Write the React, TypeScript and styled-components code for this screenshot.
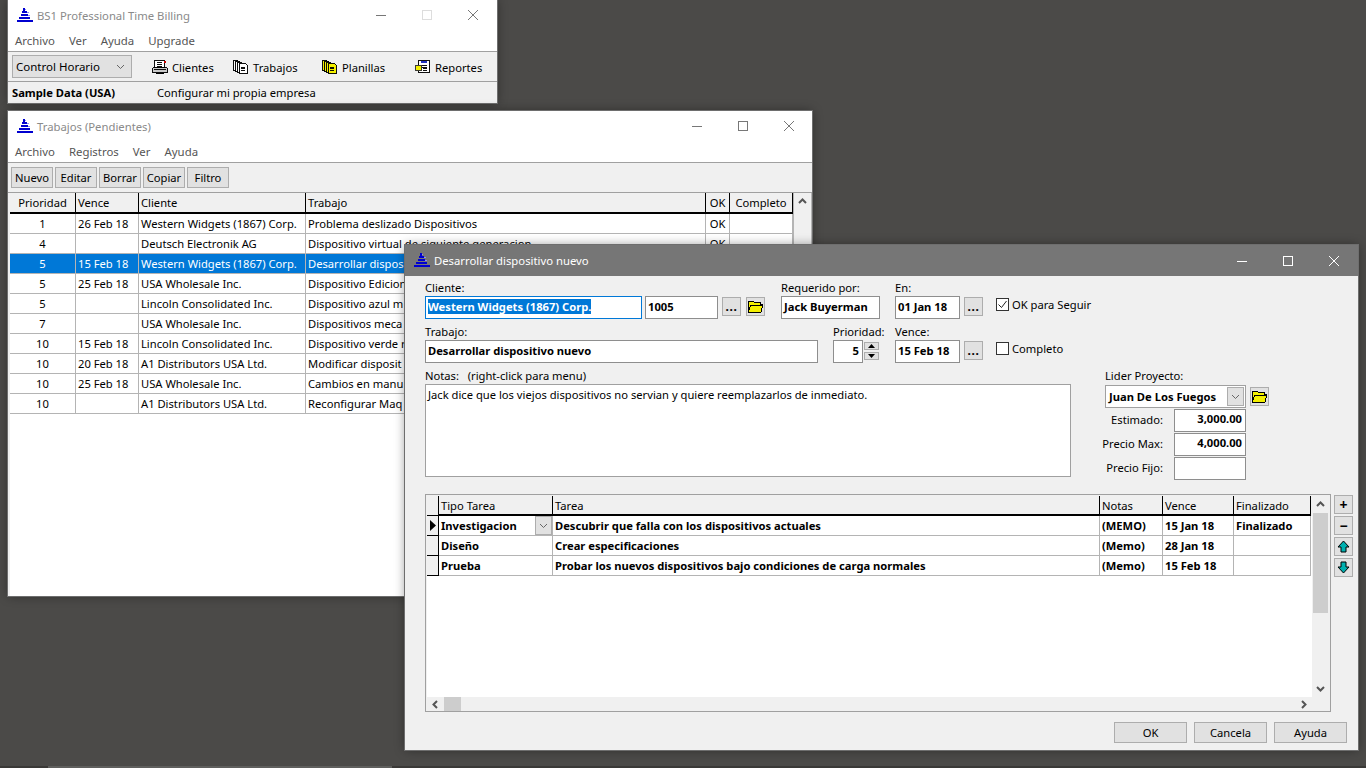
import React from "react";
import styled, { createGlobalStyle } from "styled-components";

const Global = createGlobalStyle`
  html, body { margin: 0; padding: 0; height: 100%; overflow: hidden; background: #4b4a48; }
  #root { height: 768px; }
  * { box-sizing: border-box; }
`;

const FONT = `"Noto Sans", "Liberation Sans", sans-serif`;

const Desktop = styled.div`
  position: relative;
  width: 1366px;
  height: 768px;
  background: #4b4a48;
  font-family: ${FONT};
  font-size: 11.2px;
  color: #000;
  overflow: hidden;
`;
const BottomEdge = styled.div`
  position: absolute;
  left: 0;
  right: 0;
  bottom: 0;
  height: 2px;
  display: flex;
  background: #3a3937;
`;
const BottomEdgeLight = styled.div`
  width: 344px;
  margin-left: 48px;
  background: #5f5f5d;
`;

const Win = styled.div`
  position: absolute;
  display: flex;
  flex-direction: column;
  background: #f0f0f0;
  box-shadow: 0 0 0 1px #6e6e6e, 0 0 10px rgba(0, 0, 0, 0.4);
`;
const MainWin = styled(Win)`
  left: 8px; top: 0; width: 489px; height: 103px;
`;
const JobsWin = styled(Win)`
  left: 8px; top: 111px; width: 804px; height: 485px;
`;
const DialogWin = styled(Win)`
  left: 405px; top: 245px; width: 953px; height: 505px;
`;

const TitleBar = styled.div<{ $active?: boolean }>`
  flex: 0 0 ${(p) => (p.$active ? 31 : 30)}px;
  display: flex;
  align-items: center;
  padding-left: 9px;
  background: ${(p) => (p.$active ? "#767676" : "#fff")};
  color: ${(p) => (p.$active ? "#fff" : "#8a8a8a")};
  font-size: 11.3px;
`;
const TitleText = styled.span`
  margin-left: 4px;
  flex: 1;
  white-space: nowrap;
`;
const Caption = styled.div<{ $active?: boolean }>`
  width: 46px;
  height: 30px;
  display: flex;
  align-items: center;
  justify-content: center;
  color: ${(p) => (p.$active ? "#fff" : "#777")};
`;
const CaptionRow = styled.div<{ $mr?: number }>`
  display: flex;
  margin-right: ${(p) => p.$mr ?? 1}px;
`;

const MenuBar = styled.div`
  flex: 0 0 22px;
  display: flex;
  align-items: center;
  gap: 14px;
  padding: 0 7px;
  background: #fff;
  color: #555;
  font-size: 11.4px;
  border-bottom: 1px solid #a0a0a0;
`;

const MainToolbar = styled.div`
  flex: 0 0 30px;
  display: flex;
  align-items: center;
  padding-left: 4px;
  border-bottom: 1px solid #a0a0a0;
`;
const Combo = styled.div`
  width: 120px;
  height: 23px;
  margin-right: 20px;
  display: flex;
  align-items: center;
  justify-content: space-between;
  padding: 0 6px 0 3px;
  background: #e1e1e1;
  border: 1px solid #adadad;
  font-size: 11.5px;
`;
const ToolItem = styled.div<{ $w: number }>`
  width: ${(p) => p.$w}px;
  display: flex;
  align-items: center;
  gap: 4px;
  white-space: nowrap;
  padding-top: 1px;
`;
const StatusBar = styled.div`
  flex: 1;
  display: flex;
  align-items: center;
  padding-left: 4px;
`;
const StatusName = styled.span`
  font-weight: 700;
  width: 145px;
`;

const JobsToolbar = styled.div`
  flex: 0 0 30px;
  display: flex;
  align-items: center;
  gap: 2px;
  padding-left: 3px;
  border-bottom: 1px solid #a0a0a0;
`;
const SmallBtn = styled.div`
  width: 42px;
  height: 21px;
  display: flex;
  align-items: center;
  justify-content: center;
  background: #e1e1e1;
  border: 1px solid #adadad;
`;

const JobsTable = styled.div`
  flex: 1;
  display: flex;
  margin: 0 0 0 2px;
  background: #fff;
`;
const JobsList = styled.div`
  flex: 0 0 783px;
`;
const JobsRow = styled.div<{ $sel?: boolean }>`
  display: grid;
  grid-template-columns: 66px 63px 167px 400px 24px 63px;
  height: 20px;
  background: ${(p) => (p.$sel ? "#0078d7" : "#fff")};
  color: ${(p) => (p.$sel ? "#fff" : "#000")};
`;
const Cell = styled.div<{ $center?: boolean }>`
  display: flex;
  align-items: center;
  justify-content: ${(p) => (p.$center ? "center" : "flex-start")};
  padding: 0 2px;
  border-right: 1px solid #b4b4b4;
  border-bottom: 1px solid #b4b4b4;
  white-space: nowrap;
  overflow: hidden;
`;
const HeadCell = styled(Cell)`
  background: #f0f0f0;
  border-right: 1px solid #000;
  border-bottom: 2px solid #000;
`;
const JobsHead = styled(JobsRow)`
  height: 21px;
  background: #f0f0f0;
`;

const VScroll = styled.div`
  flex: 1;
  display: flex;
  flex-direction: column;
  background: #f0f0f0;
  border-left: 1px solid #b4b4b4;
  border-right: 1px solid #b4b4b4;
`;
const ScrollArrow = styled.div`
  height: 17px;
  flex: none;
  display: flex;
  align-items: center;
  justify-content: center;
  color: #555;
`;
const ScrollThumb = styled.div`
  height: 100px;
  flex: none;
  background: #cdcdcd;
  margin: 0 1px;
`;
const ScrollFill = styled.div`
  flex: 1;
`;

/* dialog */
const DialogBody = styled.div`
  flex: 1;
  display: flex;
  flex-direction: column;
  padding: 5px 0 0 20px;
`;
const FormRow = styled.div`
  display: flex;
  height: 44px;
  align-items: flex-start;
`;
const Field = styled.div<{ $w: number; $ml?: number }>`
  width: ${(p) => p.$w}px;
  margin-left: ${(p) => p.$ml ?? 0}px;
  display: flex;
  flex-direction: column;
  white-space: nowrap;
`;
const Label = styled.label`
  height: 15px;
  line-height: 13px;
  display: block;
`;
const Input = styled.div<{ $right?: boolean; $focus?: boolean }>`
  height: 23px;
  display: flex;
  align-items: center;
  justify-content: ${(p) => (p.$right ? "flex-end" : "flex-start")};
  padding: 0 3px 2px 2px;
  background: #fff;
  border: 1px solid ${(p) => (p.$focus ? "#0078d7" : "#8e8e8e")};
  font-weight: 700;
  white-space: nowrap;
  overflow: hidden;
`;
const Selected = styled.span`
  background: #0078d7;
  color: #fff;
`;
const DotsBtn = styled.div<{ $ml: number }>`
  width: 19px;
  height: 19px;
  margin-left: ${(p) => p.$ml}px;
  margin-top: 16px;
  display: flex;
  align-items: center;
  justify-content: center;
  background: #e1e1e1;
  border: 1px solid #adadad;
  font-weight: 700;
  font-size: 12px;
  letter-spacing: 0.6px;
  line-height: 1;
`;
const CheckWrap = styled.div<{ $ml: number }>`
  margin-left: ${(p) => p.$ml}px;
  margin-top: 13px;
  display: flex;
  align-items: center;
  gap: 3px;
  height: 20px;
  white-space: nowrap;
`;
const CheckBox = styled.div`
  width: 13px;
  height: 13px;
  background: #fff;
  border: 1px solid #333;
  display: flex;
  align-items: center;
  justify-content: center;
`;
const Spinner = styled.div`
  width: 15px;
  margin-left: 1px;
  margin-top: 17px;
  display: flex;
  flex-direction: column;
  gap: 2px;
`;
const SpinBtn = styled.div`
  height: 8px;
  background: #e1e1e1;
  border: 1px solid #adadad;
  display: flex;
  align-items: center;
  justify-content: center;
`;
const NotesRow = styled.div`
  display: flex;
  height: 125px;
`;
const NotesCol = styled.div`
  width: 646px;
  display: flex;
  flex-direction: column;
`;
const NotesLabel = styled(Label)`
  white-space: pre;
`;
const NotesArea = styled.div`
  height: 93px;
  background: #fff;
  border: 1px solid #a0a0a0;
  padding: 2px 2px;
`;
const SideCol = styled.div`
  width: 164px;
  margin-left: 34px;
  display: flex;
  flex-direction: column;
`;
const LeaderRow = styled.div`
  display: flex;
  align-items: center;
  height: 24px;
`;
const LeaderCombo = styled.div`
  width: 141px;
  height: 23px;
  display: flex;
  align-items: center;
  justify-content: space-between;
  padding: 0 1px 0 3px;
  background: #fff;
  border: 1px solid #a0a0a0;
  font-weight: 700;
`;
const ComboBtn = styled.div`
  width: 17px;
  height: 19px;
  flex: none;
  background: #e1e1e1;
  border: 1px solid #adadad;
  display: flex;
  align-items: center;
  justify-content: center;
`;
const PriceRow = styled.div`
  display: flex;
  align-items: center;
  height: 24px;
  width: 141px;
`;
const PriceLabel = styled.span`
  width: 58px;
  display: flex;
  justify-content: flex-end;
  white-space: nowrap;
  flex: none;
  margin-right: 11px;
  padding-bottom: 2px;
`;
const PriceInput = styled(Input)`
  width: 72px;
  flex: none;
  padding-bottom: 4px;
`;
const IconBtn = styled.div<{ $ml?: number }>`
  width: 19px;
  height: 19px;
  margin-left: ${(p) => p.$ml ?? 0}px;
  background: #e1e1e1;
  border: 1px solid #adadad;
  display: flex;
  align-items: center;
  justify-content: center;
  flex: none;
  font-weight: 700;
  font-size: 14px;
  line-height: 1;
`;
const FolderBtn = styled(IconBtn)`
  margin-top: 16px;
`;

const GridArea = styled.div`
  display: flex;
  height: 218px;
`;
const TaskGrid = styled.div`
  width: 906px;
  display: flex;
  border: 1px solid #a0a0a0;
  padding: 1px 0 0 1px;
`;
const TaskMain = styled.div`
  flex: 1;
  display: flex;
  flex-direction: column;
`;
const TaskBody = styled.div`
  flex: 1;
  background: #fff;
  min-height: 0;
`;
const TaskRow = styled.div`
  display: grid;
  grid-template-columns: 12px 114px 547px 63px 71px 77px;
  height: 20px;
  font-weight: 700;
`;
const TaskHead = styled(TaskRow)`
  font-weight: 400;
`;
const TaskCell = styled(Cell)`
  justify-content: space-between;
  padding-right: 0;
`;
const Indicator = styled.div`
  background: #f0f0f0;
  border-right: 1px solid #000;
  border-bottom: 1px solid #000;
  display: flex;
  align-items: center;
  justify-content: flex-end;
  padding-right: 2px;
`;
const HScroll = styled.div`
  flex: 0 0 14px;
  display: flex;
  align-items: center;
  background: #f0f0f0;
  color: #555;
`;
const HArrow = styled.div`
  width: 17px;
  display: flex;
  align-items: center;
  justify-content: center;
`;
const HThumb = styled.div`
  width: 17px;
  height: 14px;
  background: #cdcdcd;
`;
const TaskScroll = styled.div`
  flex: 0 0 17px;
  display: flex;
  flex-direction: column;
  background: #f0f0f0;
  margin-right: 1px;
`;
const SideButtons = styled.div`
  display: flex;
  flex-direction: column;
  gap: 2px;
  margin-left: 3px;
  margin-top: 1px;
`;
const DialogFooter = styled.div`
  display: flex;
  justify-content: flex-end;
  gap: 7px;
  margin-top: 10px;
  padding-right: 11px;
`;
const FooterBtn = styled.div`
  width: 73px;
  height: 21px;
  display: flex;
  align-items: center;
  justify-content: center;
  background: #e1e1e1;
  border: 1px solid #adadad;
`;

const Logo = () => (
  <svg width="16" height="15" viewBox="0 0 16 15" shapeRendering="crispEdges">
    <g fill="#0000d0">
      <rect x="6" y="0" width="2" height="3" />
      <rect x="5" y="3" width="5" height="2" />
      <rect x="4" y="6" width="7" height="2" />
      <rect x="2" y="9" width="11" height="2" />
      <rect x="0" y="12" width="16" height="2" />
    </g>
    <g fill="#8c8cff">
      <rect x="8" y="1" width="1" height="1" />
      <rect x="10" y="4" width="2" height="1" />
      <rect x="11" y="7" width="2" height="1" />
    </g>
  </svg>
);

const MinIcon = () => (
  <svg width="10" height="10" viewBox="0 0 10 10"><path d="M0 5.5H10" stroke="currentColor" /></svg>
);
const MaxIcon = ({ faded }: { faded?: boolean }) => (
  <svg width="10" height="10" viewBox="0 0 10 10">
    <rect x="0.5" y="0.5" width="9" height="9" fill="none" stroke={faded ? "#ddd" : "currentColor"} />
  </svg>
);
const CloseIcon = () => (
  <svg width="10" height="10" viewBox="0 0 10 10"><path d="M0 0L10 10M10 0L0 10" stroke="currentColor" /></svg>
);
const Chevron = ({ dir = "down", thin }: { dir?: string; thin?: boolean }) => {
  const d: Record<string, string> = {
    down: "M1 3L4.5 6.5L8 3",
    up: "M1 6L4.5 2.5L8 6",
    left: "M6 1L2.5 4.5L6 8",
    right: "M3 1L6.5 4.5L3 8",
  };
  return (
    <svg width="9" height="9" viewBox="0 0 9 9">
      <path d={d[dir]} fill="none" stroke={thin ? "#666" : "#555"} strokeWidth={thin ? 1 : 2} />
    </svg>
  );
};
const Folder = () => (
  <svg width="17" height="13" viewBox="0 0 17 13" shapeRendering="crispEdges">
    <path d="M1 1H6L7 2H13V4H16L14 12H1Z" fill="#f4f000" stroke="#000" />
    <path d="M1 12L4 5H16" fill="none" stroke="#000" />
  </svg>
);
const Clientes = () => (
  <svg width="16" height="16" viewBox="0 0 17 16" shapeRendering="crispEdges">
    <path d="M3 1H13V9H3Z" fill="#fff" stroke="#000" />
    <path d="M5 3H11M5 5H11M5 7H11" stroke="#000" />
    <path d="M1 9H16V14H1Z" fill="#c8c8c8" stroke="#000" />
    <path d="M2 11H15" stroke="#000" />
    <path d="M13 2H15V4H13Z" fill="#d00000" />
    <path d="M4 14H13V15H4Z" fill="#000" />
  </svg>
);
const Docs = ({ fill }: { fill: string }) => (
  <svg width="16" height="16" viewBox="0 0 17 16" shapeRendering="crispEdges">
    <path d="M1 1H5V12H1Z" fill={fill} stroke="#000" />
    <path d="M3 2H7V13H3Z" fill={fill} stroke="#000" />
    <path d="M5 3H9V14H5Z" fill={fill} stroke="#000" />
    <path d="M7 4H13L15 6V15H7Z" fill={fill} stroke="#000" />
    <path d="M9 8H13M9 10H13M9 12H13" stroke="#000" />
  </svg>
);
const Report = () => (
  <svg width="16" height="16" viewBox="0 0 17 16" shapeRendering="crispEdges">
    <path d="M4 1H15V14H4Z" fill="#fff" stroke="#000" />
    <path d="M6 2H13V4H6Z" fill="#2030c0" />
    <path d="M6 6H13M6 8H13M8 10H13M8 12H13" stroke="#000" />
    <path d="M1 6H7V12H1Z" fill="#f4f000" stroke="#303030" />
  </svg>
);
const Arrow = ({ up }: { up?: boolean }) => (
  <svg width="13" height="13" viewBox="0 0 13 13">
    <path
      d={up ? "M6.5 1L12 7H9V12H4V7H1Z" : "M6.5 12L12 6H9V1H4V6H1Z"}
      fill="#00b0b0"
      stroke="#000"
    />
  </svg>
);

const jobs: [string, string, string, string, string][] = [
  ["1", "26 Feb 18", "Western Widgets (1867) Corp.", "Problema deslizado Dispositivos", "OK"],
  ["4", "", "Deutsch Electronik AG", "Dispositivo virtual de siguiente generacion", "OK"],
  ["5", "15 Feb 18", "Western Widgets (1867) Corp.", "Desarrollar disposi", ""],
  ["5", "25 Feb 18", "USA Wholesale Inc.", "Dispositivo Edicion", ""],
  ["5", "", "Lincoln Consolidated Inc.", "Dispositivo azul m", ""],
  ["7", "", "USA Wholesale Inc.", "Dispositivos meca", ""],
  ["10", "15 Feb 18", "Lincoln Consolidated Inc.", "Dispositivo verde r", ""],
  ["10", "20 Feb 18", "A1 Distributors USA Ltd.", "Modificar disposit", ""],
  ["10", "25 Feb 18", "USA Wholesale Inc.", "Cambios en manu", ""],
  ["10", "", "A1 Distributors USA Ltd.", "Reconfigurar Maq", ""],
];

const tasks: [string, string, string, string, string][] = [
  ["Investigacion", "Descubrir que falla con los dispositivos actuales", "(MEMO)", "15 Jan 18", "Finalizado"],
  ["Diseño", "Crear especificaciones", "(Memo)", "28 Jan 18", ""],
  ["Prueba", "Probar los nuevos dispositivos bajo condiciones de carga normales", "(Memo)", "15 Feb 18", ""],
];

export default function App() {
  return (
    <Desktop>
      <Global />
      <BottomEdge><BottomEdgeLight /></BottomEdge>
      <MainWin>
        <TitleBar>
          <Logo />
          <TitleText>BS1 Professional Time Billing</TitleText>
          <CaptionRow>
            <Caption><MinIcon /></Caption>
            <Caption><MaxIcon faded /></Caption>
            <Caption><CloseIcon /></Caption>
          </CaptionRow>
        </TitleBar>
        <MenuBar>
          <span>Archivo</span><span>Ver</span><span>Ayuda</span><span>Upgrade</span>
        </MenuBar>
        <MainToolbar>
          <Combo>Control Horario <Chevron thin /></Combo>
          <ToolItem $w={81}><Clientes />Clientes</ToolItem>
          <ToolItem $w={89}><Docs fill="#fff" />Trabajos</ToolItem>
          <ToolItem $w={93}><Docs fill="#f4f000" />Planillas</ToolItem>
          <ToolItem $w={70}><Report />Reportes</ToolItem>
        </MainToolbar>
        <StatusBar>
          <StatusName>Sample Data (USA)</StatusName>
          <span>Configurar mi propia empresa</span>
        </StatusBar>
      </MainWin>

      <JobsWin>
        <TitleBar>
          <Logo />
          <TitleText>Trabajos (Pendientes)</TitleText>
          <CaptionRow $mr={0}>
            <Caption><MinIcon /></Caption>
            <Caption><MaxIcon /></Caption>
            <Caption><CloseIcon /></Caption>
          </CaptionRow>
        </TitleBar>
        <MenuBar>
          <span>Archivo</span><span>Registros</span><span>Ver</span><span>Ayuda</span>
        </MenuBar>
        <JobsToolbar>
          <SmallBtn>Nuevo</SmallBtn>
          <SmallBtn>Editar</SmallBtn>
          <SmallBtn>Borrar</SmallBtn>
          <SmallBtn>Copiar</SmallBtn>
          <SmallBtn>Filtro</SmallBtn>
        </JobsToolbar>
        <JobsTable>
          <JobsList>
            <JobsHead>
              <HeadCell $center>Prioridad</HeadCell>
              <HeadCell>Vence</HeadCell>
              <HeadCell>Cliente</HeadCell>
              <HeadCell>Trabajo</HeadCell>
              <HeadCell $center>OK</HeadCell>
              <HeadCell $center>Completo</HeadCell>
            </JobsHead>
            {jobs.map((j, i) => (
              <JobsRow key={i} $sel={i === 2}>
                <Cell $center>{j[0]}</Cell>
                <Cell>{j[1]}</Cell>
                <Cell>{j[2]}</Cell>
                <Cell>{j[3]}</Cell>
                <Cell $center>{j[4]}</Cell>
                <Cell />
              </JobsRow>
            ))}
          </JobsList>
          <VScroll>
            <ScrollArrow><Chevron dir="up" /></ScrollArrow>
            <ScrollFill />
          </VScroll>
        </JobsTable>
      </JobsWin>

      <DialogWin>
        <TitleBar $active>
          <Logo />
          <TitleText>Desarrollar dispositivo nuevo</TitleText>
          <CaptionRow>
            <Caption $active><MinIcon /></Caption>
            <Caption $active><MaxIcon /></Caption>
            <Caption $active><CloseIcon /></Caption>
          </CaptionRow>
        </TitleBar>
        <DialogBody>
          <FormRow>
            <Field $w={217}>
              <Label>Cliente:</Label>
              <Input $focus><Selected>Western Widgets (1867) Corp.</Selected></Input>
            </Field>
            <Field $w={73} $ml={3}>
              <Label>&nbsp;</Label>
              <Input>1005</Input>
            </Field>
            <DotsBtn $ml={4}>...</DotsBtn>
            <FolderBtn $ml={5}><Folder /></FolderBtn>
            <Field $w={99} $ml={16}>
              <Label>Requerido por:</Label>
              <Input>Jack Buyerman</Input>
            </Field>
            <Field $w={65} $ml={15}>
              <Label>En:</Label>
              <Input>01 Jan 18</Input>
            </Field>
            <DotsBtn $ml={4}>...</DotsBtn>
            <CheckWrap $ml={13}>
              <CheckBox>
                <svg width="11" height="11" viewBox="0 0 11 11">
                  <path d="M1.5 5.5L4.5 8.5L9.5 2" fill="none" stroke="#222" />
                </svg>
              </CheckBox>
              OK para Seguir
            </CheckWrap>
          </FormRow>
          <FormRow>
            <Field $w={393}>
              <Label>Trabajo:</Label>
              <Input>Desarrollar dispositivo nuevo</Input>
            </Field>
            <Field $w={30} $ml={15}>
              <Label>Prioridad:</Label>
              <Input $right>5</Input>
            </Field>
            <Spinner>
              <SpinBtn><svg width="7" height="4"><path d="M3.5 0L7 4H0Z" /></svg></SpinBtn>
              <SpinBtn><svg width="7" height="4"><path d="M0 0H7L3.5 4Z" /></svg></SpinBtn>
            </Spinner>
            <Field $w={65} $ml={16}>
              <Label>Vence:</Label>
              <Input>15 Feb 18</Input>
            </Field>
            <DotsBtn $ml={4}>...</DotsBtn>
            <CheckWrap $ml={13}>
              <CheckBox />
              Completo
            </CheckWrap>
          </FormRow>
          <NotesRow>
            <NotesCol>
              <NotesLabel>{"Notas:   (right-click para menu)"}</NotesLabel>
              <NotesArea>Jack dice que los viejos dispositivos no servian y quiere reemplazarlos de inmediato.</NotesArea>
            </NotesCol>
            <SideCol>
              <Label>Lider Proyecto:</Label>
              <LeaderRow>
                <LeaderCombo>Juan De Los Fuegos<ComboBtn><Chevron thin /></ComboBtn></LeaderCombo>
                <IconBtn $ml={4}><Folder /></IconBtn>
              </LeaderRow>
              <PriceRow><PriceLabel>Estimado:</PriceLabel><PriceInput $right>3,000.00</PriceInput></PriceRow>
              <PriceRow><PriceLabel>Precio Max:</PriceLabel><PriceInput $right>4,000.00</PriceInput></PriceRow>
              <PriceRow><PriceLabel>Precio Fijo:</PriceLabel><PriceInput $right /></PriceRow>
            </SideCol>
          </NotesRow>
          <GridArea>
            <TaskGrid>
              <TaskMain>
                <TaskHead>
                  <Indicator />
                  <HeadCell>Tipo Tarea</HeadCell>
                  <HeadCell>Tarea</HeadCell>
                  <HeadCell>Notas</HeadCell>
                  <HeadCell>Vence</HeadCell>
                  <HeadCell>Finalizado</HeadCell>
                </TaskHead>
                <TaskBody>
                  {tasks.map((t, i) => (
                    <TaskRow key={i}>
                      <Indicator>
                        {i === 0 && <svg width="6" height="11"><path d="M0 0L6 5.5L0 11Z" /></svg>}
                      </Indicator>
                      <TaskCell>
                        {t[0]}
                        {i === 0 && <ComboBtn><Chevron thin /></ComboBtn>}
                      </TaskCell>
                      <TaskCell>{t[1]}</TaskCell>
                      <TaskCell>{t[2]}</TaskCell>
                      <TaskCell>{t[3]}</TaskCell>
                      <TaskCell>{t[4]}</TaskCell>
                    </TaskRow>
                  ))}
                </TaskBody>
                <HScroll>
                  <HArrow><Chevron dir="left" /></HArrow>
                  <HThumb />
                  <ScrollFill />
                  <HArrow><Chevron dir="right" /></HArrow>
                </HScroll>
              </TaskMain>
              <TaskScroll>
                <ScrollArrow><Chevron dir="up" /></ScrollArrow>
                <ScrollThumb />
                <ScrollFill />
                <ScrollArrow><Chevron dir="down" /></ScrollArrow>
                <HScroll />
              </TaskScroll>
            </TaskGrid>
            <SideButtons>
              <IconBtn>+</IconBtn>
              <IconBtn>−</IconBtn>
              <IconBtn><Arrow up /></IconBtn>
              <IconBtn><Arrow /></IconBtn>
            </SideButtons>
          </GridArea>
          <DialogFooter>
            <FooterBtn>OK</FooterBtn>
            <FooterBtn>Cancela</FooterBtn>
            <FooterBtn>Ayuda</FooterBtn>
          </DialogFooter>
        </DialogBody>
      </DialogWin>
    </Desktop>
  );
}
